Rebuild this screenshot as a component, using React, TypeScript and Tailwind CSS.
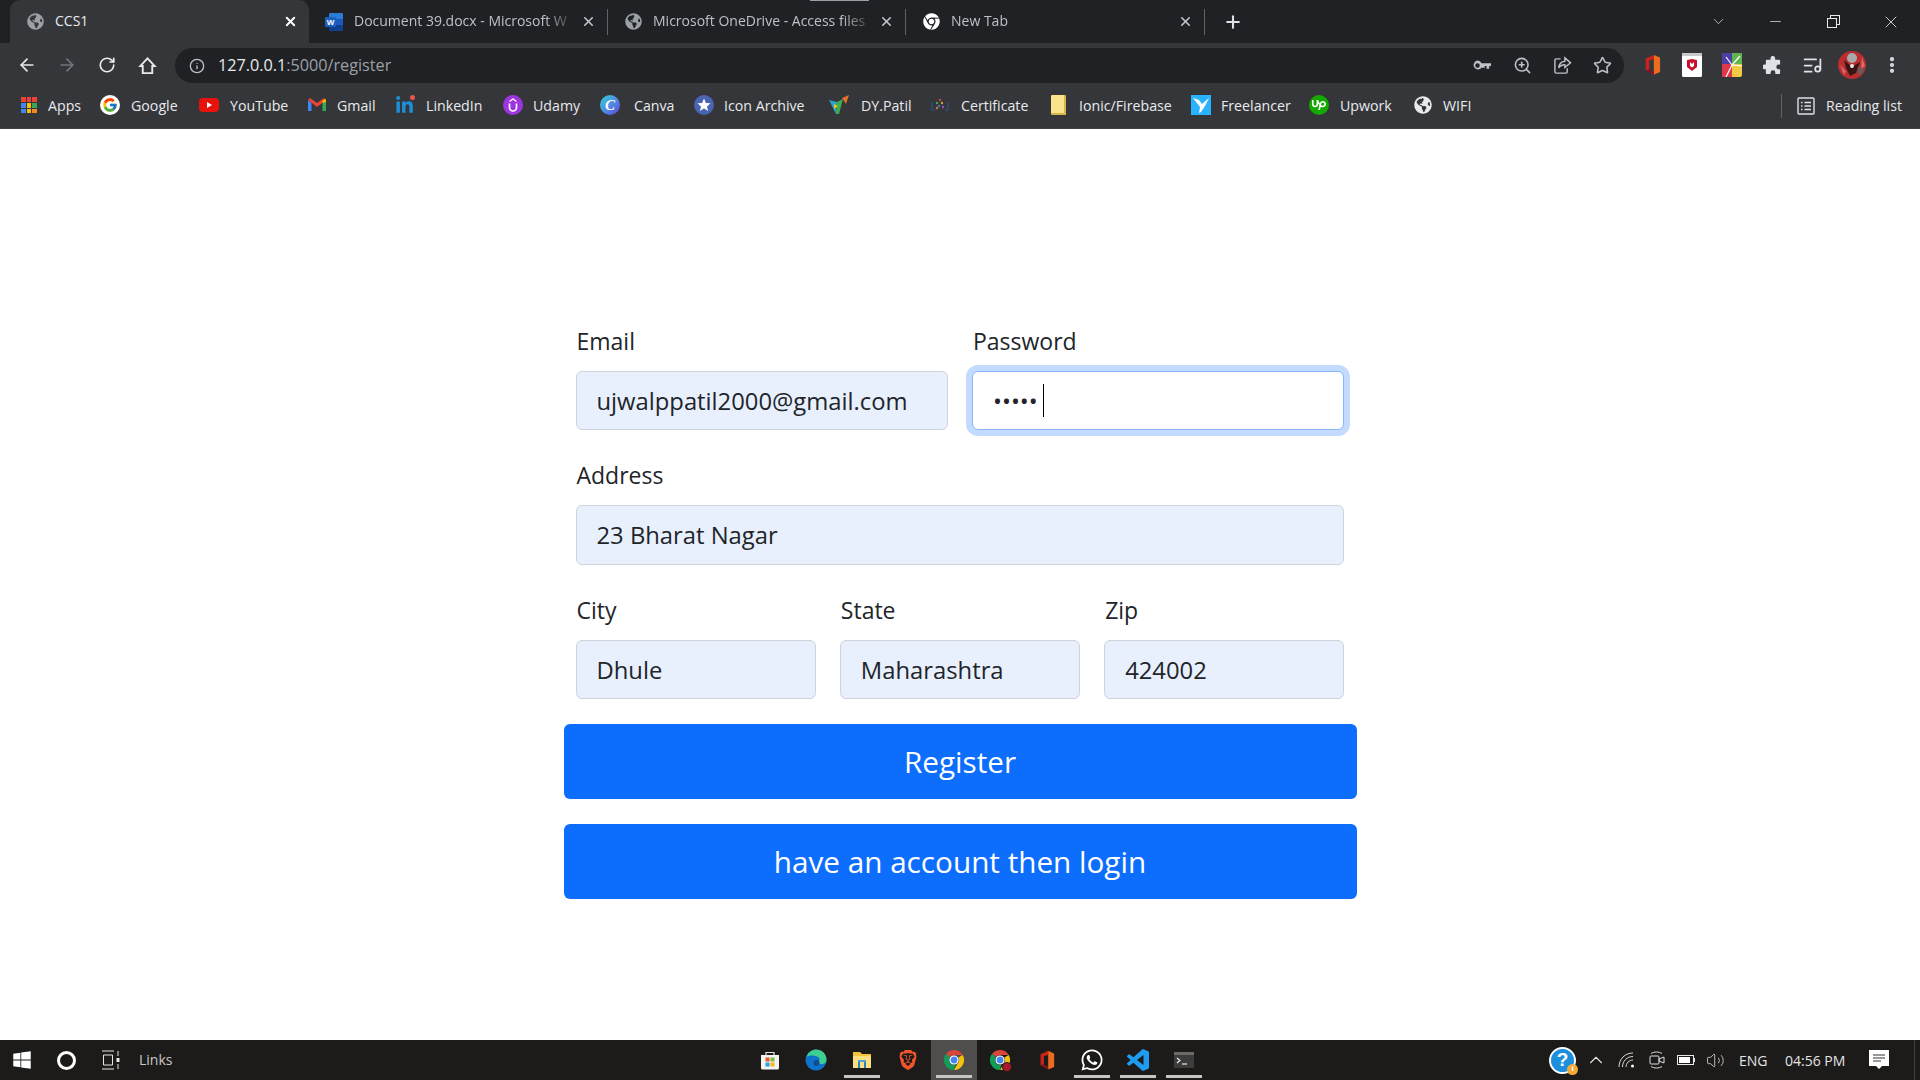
import type { ReactNode } from 'react';
import { ArrowLeft, ArrowRight, ChevronDown, ChevronUp, EllipsisVertical, Info, ListMusic, Minus, Plus, RotateCw, Star, Volume2, X, ZoomIn } from 'lucide-react';
import { FaChrome, FaGlobeAmericas, FaLinkedinIn, FaWhatsapp, FaWindows } from 'react-icons/fa';
import { FcGoogle } from 'react-icons/fc';
import { SiBrave, SiUpwork } from 'react-icons/si';

const uiFont = "font-['Open_Sans','Liberation_Sans',sans-serif]";

function WordIcon() {
  return (
    <svg viewBox="0 0 20 20" className="h-5 w-5">
      <rect x="5" y="1" width="14" height="18" rx="1" fill="#2b7cd3" />
      <rect x="5" y="7" width="14" height="6" fill="#185abd" />
      <rect x="5" y="13" width="14" height="6" fill="#103f91" />
      <rect x="1" y="5" width="11" height="10" rx="1" fill="#1e5fbf" />
      <text x="6.5" y="13" textAnchor="middle" fontSize="8" fontWeight="700" fill="#fff" fontFamily="Liberation Sans">W</text>
    </svg>
  );
}

function AppsIcon() {
  const colors = ['#ea4335', '#ea4335', '#ea4335', '#4285f4', '#fbbc05', '#34a853', '#4285f4', '#fbbc05', '#f28b24'];
  return (
    <div className="grid h-4 w-4 grid-cols-3 gap-[1px]">
      {colors.map((c, i) => (
        <span key={i} style={{ backgroundColor: c }} />
      ))}
    </div>
  );
}

function GoogleIcon() {
  return (
    <div className="flex h-5 w-5 items-center justify-center rounded-full bg-white">
      <FcGoogle size={16} />
    </div>
  );
}

function YoutubeIcon() {
  return (
    <svg viewBox="0 0 20 20" className="h-5 w-5">
      <rect x="0" y="3" width="20" height="14" rx="4" fill="#e8120c" />
      <path d="M8 7l5 3-5 3z" fill="#fff" />
    </svg>
  );
}

function GmailIcon() {
  return (
    <svg viewBox="0 0 20 20" className="h-5 w-5">
      <path d="M1 5v11h3.5V8z" fill="#4285f4" />
      <path d="M19 5v11h-3.5V8z" fill="#34a853" />
      <path d="M1 5l9 7 9-7-2-2-7 5-7-5z" fill="#ea4335" />
      <path d="M15.5 8V5.5L19 4v3z" fill="#fbbc05" />
    </svg>
  );
}

function LinkedinIcon() {
  return (
    <div className="relative h-5 w-5">
      <FaLinkedinIn size={19} color="#1d8fd8" className="absolute bottom-0 left-0" />
      <span className="absolute top-0 right-0 h-[5px] w-[5px] rounded-full bg-[#e8584f]" />
    </div>
  );
}

function UdemyIcon() {
  return (
    <svg viewBox="0 0 20 20" className="h-5 w-5">
      <circle cx="10" cy="10" r="10" fill="#9c35e0" />
      <path d="M6.5 8.5v4a3.5 3.5 0 0 0 7 0v-4" fill="none" stroke="#fff" strokeWidth="1.7" />
      <path d="M6.5 6.5L10 4l3.5 2.5" fill="none" stroke="#fff" strokeWidth="1.2" />
    </svg>
  );
}

function CanvaIcon() {
  return (
    <div className="flex h-5 w-5 items-center justify-center rounded-full bg-gradient-to-br from-[#1fd0d8] to-[#5b3be0] font-['Liberation_Serif',serif] text-[15px] leading-none font-bold text-white italic">
      C
    </div>
  );
}

function StarBadgeIcon() {
  return (
    <svg viewBox="0 0 20 20" className="h-5 w-5">
      <circle cx="10" cy="10" r="10" fill="#4a64b4" />
      <path d="M10 3.5l1.9 4.4 4.7.4-3.6 3.1 1.1 4.6-4.1-2.5-4.1 2.5 1.1-4.6-3.6-3.100 4.700-.4z" fill="#fff" />
    </svg>
  );
}

function DyPatilIcon() {
  return (
    <svg viewBox="0 0 20 20" className="h-5 w-5">
      <path d="M0 5l8 2-1 12z" fill="#2aa5c9" />
      <path d="M8 7l6-3-4 15-3 0z" fill="#3fae49" />
      <path d="M13 3l7-3-3 9z" fill="#e2702a" />
      <path d="M5 9l4 2-4 3z" fill="#f0c419" />
    </svg>
  );
}

function CertificateIcon() {
  return (
    <svg viewBox="0 0 20 20" className="h-5 w-5">
      <path d="M2 7v8h3M18 7v8h-3" fill="none" stroke="#2a4d7a" strokeWidth="1.4" />
      <circle cx="10" cy="5" r="1.2" fill="#c84a4a" />
      <circle cx="7" cy="8" r="1.2" fill="#4aa35c" />
      <circle cx="12" cy="8" r="1.2" fill="#d0a13a" />
      <circle cx="9" cy="11" r="1.2" fill="#3f78c0" />
      <circle cx="13" cy="12" r="1.2" fill="#a34ac0" />
      <circle cx="7" cy="13" r="1.2" fill="#d07a3a" />
    </svg>
  );
}

function FolderIcon() {
  return <div className="h-[20px] w-[15px] rounded-[1px] border-r-2 border-b-2 border-[#d9b64a] bg-[#fbe38c]" />;
}

function FreelancerIcon() {
  return (
    <svg viewBox="0 0 20 20" className="h-5 w-5">
      <rect width="20" height="20" fill="#29b2fe" />
      <path d="M2 3l6 2 3 4 7-6-4 8-4 6-2 1 1-6z" fill="#fff" />
    </svg>
  );
}

function UpworkIcon() {
  return (
    <div className="flex h-5 w-5 items-center justify-center rounded-full bg-[#14a800]">
      <SiUpwork size={14} color="#fff" />
    </div>
  );
}

function OfficeIcon({ size = 18 }: { size?: number }) {
  return (
    <svg viewBox="0 0 20 24" width={size} height={size * 1.2}>
      <path d="M12 1l7 3v16l-7 3z" fill="#eb6c1f" />
      <path d="M12 1L3 5v13l4-1V7l5-1z" fill="#c8241c" />
      <path d="M3 18l9 5v-3l-5-3z" fill="#8a1420" />
    </svg>
  );
}

function McafeeIcon() {
  return (
    <svg viewBox="0 0 20 24" className="h-6 w-5">
      <rect width="20" height="24" rx="1.5" fill="#fff" />
      <rect width="20" height="3" fill="#c9c9c9" />
      <path d="M5 7l5-1 5 1v7l-5 4-5-4z" fill="#c8102e" />
      <path d="M8 9v4l2 1.5 2-1.5V9l-2 2z" fill="#fff" />
    </svg>
  );
}

function ColorTileIcon() {
  return (
    <svg viewBox="0 0 20 24" className="h-6 w-5">
      <rect width="20" height="24" rx="2" fill="#f1c945" />
      <path d="M0 0h10v11H0z" fill="#4b3fa6" />
      <path d="M10 0h10v11H10z" fill="#5fb350" />
      <path d="M0 11h10v13H0z" fill="#e0384a" />
      <path d="M10 12L4 24M10 12l8-9M10 12L4 4M10 12l10 1" stroke="#fff" strokeWidth="1.2" />
    </svg>
  );
}

function PuzzleIcon() {
  return (
    <svg viewBox="0 0 20 20" className="h-[19px] w-[19px]" fill="#dee1e6">
      <path d="M8 1.500a2.500 2.500 0 0 1 4.800 1V4H17a1 1 0 0 1 1 1v4h-1.500a2.500 2.500 0 0 0 0 5H18v4a1 1 0 0 1-1 1h-4v-1.500a2.500 2.500 0 0 0-5 0V19H4a1 1 0 0 1-1-1v-4H1.800a2.500 2.500 0 0 1 0-5H3V5a1 1 0 0 1 1-1h4z" />
    </svg>
  );
}

function Avatar() {
  return (
    <svg viewBox="0 0 28 28" className="h-7 w-7">
      <circle cx="14" cy="14" r="14" fill="#b92e2e" />
      <circle cx="14" cy="7" r="5" fill="#a9a9a9" />
      <path d="M6 9l8 7 8-5-4 11-6 3-4-8z" fill="#3a1517" />
      <path d="M2 14l6 6-2 4zM24 6l3 9-4 3z" fill="#d96a6a" />
      <path d="M20 16l6 2-3 6-4-2z" fill="#6a5a5a" />
      <circle cx="14" cy="15" r="2" fill="#e9e9e9" />
    </svg>
  );
}

function KeyIcon() {
  return (
    <svg viewBox="0 0 20 12" className="h-3 w-[18px]" fill="#bdc1c6">
      <path fillRule="evenodd" d="M5 0a5 5 0 0 1 4.600 3H20v3h-2v3h-3V6h-2v2h-3V7.500A5 5 0 1 1 5 0zm0 3a2 2 0 1 0 0 5 2 2 0 0 0 0-5z" />
    </svg>
  );
}

function ShareBoxIcon() {
  return (
    <svg viewBox="0 0 20 20" className="h-[19px] w-[19px]" fill="none" stroke="#bdc1c6" strokeWidth="1.5">
      <path d="M8 3H3.500A1.500 1.500 0 0 0 2 4.500v12A1.500 1.500 0 0 0 3.500 18h10a1.500 1.500 0 0 0 1.500-1.500V13" />
      <path d="M12.500 2L18.500 7.200l-6 5v-3c-3 0-5 1-6.500 3.300.3-3.800 2.500-6.500 6.500-7z" />
    </svg>
  );
}

function HomeIcon() {
  return (
    <svg viewBox="0 0 20 20" className="h-[19px] w-[19px]" fill="none" stroke="#e8eaed" strokeWidth="2">
      <path d="M10 2.500L2.500 10.500H5V18h10v-7.500h2.500z" />
    </svg>
  );
}

function ReadingListIcon() {
  return (
    <svg viewBox="0 0 18 18" className="h-[18px] w-[18px]" fill="none" stroke="#dee1e6" strokeWidth="1.4">
      <rect x="1" y="1" width="16" height="16" rx="1" />
      <path d="M4 5.500h1.500M7.500 5.500H14M4 9h1.500M7.500 9H14M4 12.500h1.500M7.500 12.500H14" />
    </svg>
  );
}

function StoreIcon() {
  return (
    <svg viewBox="0 0 20 20" className="h-5 w-5">
      <path d="M1 5h18v13a1.500 1.500 0 0 1-1.500 1.500h-15A1.500 1.500 0 0 1 1 18z" fill="#f3f3f3" />
      <path d="M6 5V2.500h8V5" fill="none" stroke="#e6e6e6" strokeWidth="1.200" />
      <rect x="5.500" y="7.500" width="4" height="4" fill="#e8552c" />
      <rect x="10.500" y="7.500" width="4" height="4" fill="#7eb73d" />
      <rect x="5.500" y="12.500" width="4" height="4" fill="#2a9fe0" />
      <rect x="10.500" y="12.500" width="4" height="4" fill="#f5b921" />
    </svg>
  );
}

function EdgeIcon() {
  return (
    <svg viewBox="0 0 22 22" className="h-[22px] w-[22px]">
      <circle cx="11" cy="11" r="10.500" fill="#0f74c9" />
      <path d="M1.500 8C3.500 2 9 .5 11 .5c5.500 0 10.500 4 10.500 10 0 4-3.500 5-6 4.500-2-.4-3-1.500-3-3 3 .5 3-3-.5-4.500C8 6 3.500 6.500 1.500 8z" fill="#3fce8e" />
      <circle cx="11.500" cy="14" r="3" fill="#124a94" />
    </svg>
  );
}

function ExplorerIcon() {
  return (
    <svg viewBox="0 0 20 18" className="h-[18px] w-5">
      <path d="M1 1h7l2 2h9v3H1z" fill="#f1c33f" />
      <rect x="1" y="5" width="18" height="12" fill="#fbdf80" />
      <rect x="6" y="9" width="8" height="2" fill="#4fa2d8" />
      <path d="M6 11h2v6H6zM12 11h2v6h-2z" fill="#2d80b8" />
    </svg>
  );
}

function ChromeColorIcon({ badge = false }: { badge?: boolean }) {
  return (
    <div className="relative h-5 w-5">
      <svg viewBox="0 0 20 20" className="h-5 w-5">
        <path d="M10 0a10 10 0 0 1 8.700 5H10a5 5 0 0 0-4.400 2.600L2.300 3.600A10 10 0 0 1 10 0z" fill="#db4437" />
        <path d="M18.700 5A10 10 0 0 1 10 20l4.300-7.500A5 5 0 0 0 14.300 7.500z" fill="#f4c20d" />
        <path d="M10 20A10 10 0 0 1 2.300 3.600l3.300 4a5 5 0 0 0 5.700 7.200z" fill="#0f9d58" />
        <circle cx="10" cy="10" r="4" fill="#4285f4" stroke="#fff" strokeWidth="1.200" />
      </svg>
      {badge && <span className="absolute -right-[2px] -bottom-[2px] h-[10px] w-[10px] rounded-full border border-[#2a1a1c] bg-[#a8192c]" />}
    </div>
  );
}

function VscodeIcon() {
  return (
    <svg viewBox="0 0 24 24" className="h-[22px] w-[22px]" fill="#1f9cf0">
      <path d="M23.150 2.587L18.210.21a1.494 1.494 0 0 0-1.705.29l-9.460 8.630-4.120-3.128a.999.999 0 0 0-1.276.057L.327 7.261A1 1 0 0 0 .326 8.740L3.899 12 .326 15.260a1 1 0 0 0 .001 1.479L1.650 17.940a.999.999 0 0 0 1.276.057l4.120-3.128 9.460 8.630a1.492 1.492 0 0 0 1.704.290l4.942-2.377A1.500 1.500 0 0 0 24 20.060V3.939a1.500 1.500 0 0 0-.850-1.352zm-5.146 14.861L10.826 12l7.178-5.448v10.896z" />
    </svg>
  );
}

function TerminalIcon() {
  return (
    <svg viewBox="0 0 20 16" className="h-4 w-5">
      <rect width="20" height="16" fill="#3c3c3c" />
      <rect width="20" height="3" fill="#6a6a6a" />
      <path d="M3 6l3 2.500L3 11" fill="none" stroke="#e8e8e8" strokeWidth="1.200" />
      <path d="M8 12h5" stroke="#e8e8e8" strokeWidth="1.200" />
    </svg>
  );
}

function HelpIcon() {
  return (
    <div className="relative flex h-[27px] w-[27px] items-center justify-center rounded-full border-2 border-white bg-[#1c8fdc] font-['Liberation_Sans',sans-serif] text-[19px] font-bold text-white">
      ?
      <span className="absolute -right-[4px] -bottom-[3px] flex h-[11px] w-[11px] items-center justify-center rounded-full bg-[#f2a93b] text-[8px] leading-none">i</span>
    </div>
  );
}

function WifiIcon() {
  return (
    <svg viewBox="0 0 18 18" className="h-[18px] w-[18px]" fill="none" stroke="#d8d8d8" strokeWidth="1">
      <path d="M1 16C1 8 7 2 15 2M4.500 16c0-6 4.500-10.500 10.500-10.500M8 16c0-3.800 3.200-7 7-7" />
      <circle cx="14.500" cy="15" r="1.500" fill="#fff" stroke="none" />
    </svg>
  );
}

function MeetIcon() {
  return (
    <svg viewBox="0 0 16 20" className="h-5 w-4" fill="none" stroke="#e0e0e0" strokeWidth="1">
      <rect x="1" y="6" width="9" height="8" rx="1" />
      <path d="M10 9l5-2v6l-5-2zM2 3.500C5 1.500 10 1.500 13 3.500M2 16.500c3 2 8 2 11 0" />
    </svg>
  );
}

function BatteryIcon() {
  return (
    <div className="flex items-center">
      <div className="flex h-[10px] w-[17px] items-center border border-[#e8e8e8] p-[1px]">
        <div className="h-full w-[11px] bg-white" />
      </div>
      <div className="h-[4px] w-[1px] bg-[#e8e8e8]" />
    </div>
  );
}

function NotifyIcon() {
  return (
    <svg viewBox="0 0 20 20" className="h-5 w-5">
      <path d="M0 0h20v16h-7l-3 3-3-3H0z" fill="#fff" />
      <path d="M4 5h12M4 8h12M4 11h8" stroke="#333" strokeWidth="1" />
    </svg>
  );
}

const tabs: { title: string; icon: ReactNode; active?: boolean; width: string }[] = [
  { title: 'CCS1', icon: <FaGlobeAmericas size={17} color="#9aa0a6" />, active: true, width: 'w-[299px]' },
  { title: 'Document 39.docx - Microsoft W', icon: <WordIcon />, width: 'w-[299px]' },
  { title: 'Microsoft OneDrive - Access files', icon: <FaGlobeAmericas size={17} color="#9aa0a6" />, width: 'w-[298px]' },
  { title: 'New Tab', icon: <FaChrome size={17} color="#fff" />, width: 'w-[299px]' },
];

function Tab({ title, icon, active, width }: (typeof tabs)[number]) {
  return (
    <div className={`flex h-[43px] items-center pl-[15px] ${width} ${active ? 'rounded-t-[10px] bg-[#35363a] pr-[11px] text-[#e8eaed]' : 'text-[#bdc1c6]'}`}>
      <div className="flex w-[20px] shrink-0 justify-center">{icon}</div>
      <span className={`ml-[10px] min-w-0 flex-1 pb-[3px] text-[14px] whitespace-nowrap ${uiFont} ${active ? '' : '[mask-image:linear-gradient(to_right,black_84%,transparent_98%)]'}`}>{title}</span>
      <X size={15} strokeWidth={active ? 3 : 2.5} className={`shrink-0 ${active ? 'text-white' : 'text-[#c4c7cc]'}`} />
      {!active && <span className="ml-[11px] h-[26px] w-[1px] shrink-0 bg-[#5f6368]" />}
    </div>
  );
}

const bookmarks: { label: string; icon: ReactNode; width: string; gap: string }[] = [
  { label: 'Apps', icon: <AppsIcon />, width: 'w-[81px]', gap: 'ml-[9px]' },
  { label: 'Google', icon: <GoogleIcon />, width: 'w-[99px]', gap: 'ml-[11px]' },
  { label: 'YouTube', icon: <YoutubeIcon />, width: 'w-[108px]', gap: 'ml-[11px]' },
  { label: 'Gmail', icon: <GmailIcon />, width: 'w-[88px]', gap: 'ml-[10px]' },
  { label: 'LinkedIn', icon: <LinkedinIcon />, width: 'w-[108px]', gap: 'ml-[11px]' },
  { label: 'Udamy', icon: <UdemyIcon />, width: 'w-[97px]', gap: 'ml-[10px]' },
  { label: 'Canva', icon: <CanvaIcon />, width: 'w-[94px]', gap: 'ml-[14px]' },
  { label: 'Icon Archive', icon: <StarBadgeIcon />, width: 'w-[135px]', gap: 'ml-[10px]' },
  { label: 'DY.Patil', icon: <DyPatilIcon />, width: 'w-[101px]', gap: 'ml-[12px]' },
  { label: 'Certificate', icon: <CertificateIcon />, width: 'w-[118px]', gap: 'ml-[11px]' },
  { label: 'Ionic/Firebase', icon: <FolderIcon />, width: 'w-[143px]', gap: 'ml-[11px]' },
  { label: 'Freelancer', icon: <FreelancerIcon />, width: 'w-[118px]', gap: 'ml-[10px]' },
  { label: 'Upwork', icon: <UpworkIcon />, width: 'w-[104px]', gap: 'ml-[11px]' },
  { label: 'WIFI', icon: <FaGlobeAmericas size={18} color="#e8eaed" />, width: 'w-[70px]', gap: 'ml-[10px]' },
];

function ToolButton({ children }: { children: ReactNode }) {
  return <div className="flex w-[40px] justify-center">{children}</div>;
}

const taskIcons: { icon: ReactNode; line?: boolean; active?: boolean }[] = [
  { icon: <StoreIcon /> },
  { icon: <EdgeIcon /> },
  { icon: <ExplorerIcon />, line: true },
  { icon: <SiBrave size={20} color="#f2552c" /> },
  { icon: <ChromeColorIcon />, line: true, active: true },
  { icon: <ChromeColorIcon badge /> },
  { icon: <OfficeIcon size={17} /> },
  { icon: <FaWhatsapp size={24} color="#fff" />, line: true },
  { icon: <VscodeIcon />, line: true },
  { icon: <TerminalIcon />, line: true },
];

function Field({ label, value, type = 'text', focused, height = 'h-[59px]', className = '' }: { label: string; value: string; type?: string; focused?: boolean; height?: string; className?: string }) {
  return (
    <div className={className}>
      <label className="mb-[12px] block pl-[1px] text-[23px] leading-[36px] text-[#212529]">{label}</label>
      <div className="relative">
        <input
          readOnly
          type={type}
          value={value}
          className={`block w-full rounded-[6px] border pr-[19px] pl-[20px] text-[23.8px] text-[#212529] outline-none ${height} ${focused ? 'border-[#86b7fe] bg-white shadow-[0_0_0_6px_rgba(13,110,253,0.25)]' : 'border-[#ced4da] bg-[#e8f0fe]'}`}
        />
        {focused && <span className="absolute top-[13px] left-[71px] h-[33px] w-[1px] bg-black" />}
      </div>
    </div>
  );
}

export default function App() {
  return (
    <div className={`flex h-screen w-full flex-col overflow-hidden bg-white ${uiFont}`}>
      {/* tab strip */}
      <div className="relative flex h-[43px] shrink-0 items-center bg-[#202124] pl-[10px]">
        <span className="absolute top-0 left-[810px] h-[1px] w-[59px] bg-[#9aa0a6]" />
        {tabs.map((t) => (
          <Tab key={t.title} {...t} />
        ))}
        <Plus size={20} strokeWidth={2.5} className="ml-[18px] text-[#dee1e6]" />
        <div className="ml-auto flex items-center text-[#e8eaed]">
          <ChevronDown size={17} strokeWidth={1} className="mr-[19px]" />
          <div className="flex w-[58px] justify-center"><Minus size={17} strokeWidth={1} /></div>
          <div className="flex w-[58px] justify-center">
            <div className="relative h-[13px] w-[13px]">
              <span className="absolute top-0 right-0 h-[10px] w-[10px] border border-[#e8eaed]" />
              <span className="absolute bottom-0 left-0 h-[10px] w-[10px] border border-[#e8eaed] bg-[#202124]" />
            </div>
          </div>
          <div className="flex w-[58px] justify-center"><X size={20} strokeWidth={1} /></div>
        </div>
      </div>

      {/* toolbar */}
      <div className="flex h-[40px] shrink-0 items-start bg-[#35363a] pl-[7px]">
        <div className="flex h-[40px] items-center pt-[4px]">
          <ToolButton><ArrowLeft size={20} strokeWidth={2} className="text-[#e8eaed]" /></ToolButton>
          <ToolButton><ArrowRight size={20} strokeWidth={2} className="text-[#72757a]" /></ToolButton>
          <ToolButton><RotateCw size={18} strokeWidth={2.2} className="text-[#e8eaed]" /></ToolButton>
          <ToolButton><HomeIcon /></ToolButton>
        </div>
        <div className="mt-[5px] ml-[8px] flex h-[35px] w-[1449px] items-center rounded-full bg-[#202124] pl-[14px]">
          <Info size={16} className="text-[#bdc1c6]" />
          <span className="ml-[13px] text-[16.2px] text-[#e8eaed]">127.0.0.1<span className="text-[#9aa0a6]">:5000/register</span></span>
          <div className="ml-auto flex items-center pr-[2px]">
            <ToolButton><KeyIcon /></ToolButton>
            <ToolButton><ZoomIn size={19} className="text-[#bdc1c6]" /></ToolButton>
            <ToolButton><ShareBoxIcon /></ToolButton>
            <ToolButton><Star size={19} className="text-[#bdc1c6]" /></ToolButton>
          </div>
        </div>
        <div className="ml-[8px] flex h-[40px] items-center pt-[4px]">
          <ToolButton><OfficeIcon /></ToolButton>
          <ToolButton><McafeeIcon /></ToolButton>
          <ToolButton><ColorTileIcon /></ToolButton>
          <ToolButton><PuzzleIcon /></ToolButton>
          <ToolButton><ListMusic size={21} className="text-[#dee1e6]" /></ToolButton>
          <ToolButton><Avatar /></ToolButton>
          <ToolButton><EllipsisVertical size={20} strokeWidth={3} className="text-[#dee1e6]" /></ToolButton>
        </div>
      </div>

      {/* bookmarks */}
      <div className="flex h-[46px] shrink-0 items-center border-b border-[#3c4043] bg-[#35363a] pl-[19px] text-[14.2px] text-[#e8eaed]">
        {bookmarks.map((b) => (
          <div key={b.label} className={`flex items-center ${b.width}`}>
            <div className="flex w-[20px] justify-center">{b.icon}</div>
            <span className={`whitespace-nowrap ${b.gap}`}>{b.label}</span>
          </div>
        ))}
        <div className="ml-auto flex items-center pr-[18px]">
          <div className="mr-[15px] h-[24px] w-[1px] bg-[#5f6368]" />
          <ReadingListIcon />
          <span className="ml-[11px] whitespace-nowrap">Reading list</span>
        </div>
      </div>

      {/* page */}
      <main className="flex min-h-0 flex-1 flex-col items-center bg-white pt-[194px] font-['Open_Sans',sans-serif]">
        <form className="w-[793px]">
          <div className="grid grid-cols-12 gap-x-[24px] gap-y-[27px] px-[12px]">
            <Field className="col-span-6" label="Email" value="ujwalppatil2000@gmail.com" />
            <Field className="col-span-6" label="Password" value="12345" type="password" focused />
            <Field className="col-span-12" label="Address" value="23 Bharat Nagar" height="h-[60px]" />
            <Field className="col-span-4" label="City" value="Dhule" />
            <Field className="col-span-4" label="State" value="Maharashtra" />
            <Field className="col-span-4" label="Zip" value="424002" />
          </div>
          <button type="button" className="mt-[25px] block h-[75px] w-full rounded-[6px] bg-[#0d6efd] pt-[2px] text-[29.7px] text-white">Register</button>
          <button type="button" className="mt-[25px] block h-[75px] w-full rounded-[6px] bg-[#0d6efd] pt-[2px] text-[29.7px] text-white">have an account then login</button>
        </form>
      </main>

      {/* taskbar */}
      <footer className="relative flex h-[40px] shrink-0 items-center bg-[#1c1b1a] text-[14px]">
        <div className="flex w-[43px] justify-center"><FaWindows size={20} color="#fff" /></div>
        <div className="flex w-[46px] justify-center"><span className="h-[19px] w-[19px] rounded-full border-[3px] border-white" /></div>
        <div className="flex w-[44px] justify-center">
          <svg viewBox="0 0 20 20" className="h-5 w-5" fill="none" stroke="#e8e8e8" strokeWidth="1">
            <path d="M1 1h12M1 19h12M2.500 5h9v10h-9zM17 1v5M17 14v5" />
            <rect x="15.500" y="8" width="3" height="4" fill="#e8e8e8" stroke="none" />
          </svg>
        </div>
        <span className="ml-[6px] pb-[1px] text-[#c8c8c8]">Links</span>

        <div className="absolute top-0 left-[747px] flex h-full">
          {taskIcons.map((t, i) => (
            <div key={i} className={`relative flex h-[40px] w-[46px] items-center justify-center ${t.active ? 'bg-[#4f4e4d]' : ''}`}>
              {t.icon}
              {t.line && <span className="absolute bottom-[2px] left-[5px] h-[3px] w-[36px] bg-[#c9c5c2]" />}
            </div>
          ))}
        </div>

        <div className="ml-auto flex items-center pr-[19px] text-[#e4e4e4]">
          <HelpIcon />
          <div className="ml-[5px] flex w-[30px] justify-center"><ChevronUp size={22} strokeWidth={1.2} /></div>
          <div className="flex w-[31px] justify-center"><WifiIcon /></div>
          <div className="flex w-[29px] justify-center"><MeetIcon /></div>
          <div className="flex w-[30px] justify-center"><BatteryIcon /></div>
          <div className="flex w-[28px] justify-center"><Volume2 size={19} strokeWidth={1} /></div>
          <span className="ml-[10px] w-[46px] text-[14px]">ENG</span>
          <span className="w-[72px] text-[14px] whitespace-nowrap">04:56 PM</span>
          <div className="flex w-[44px] justify-center"><NotifyIcon /></div>
        </div>
        <span className="absolute top-0 right-[5px] h-full w-[1px] bg-[#3f3f3f]" />
      </footer>
    </div>
  );
}
